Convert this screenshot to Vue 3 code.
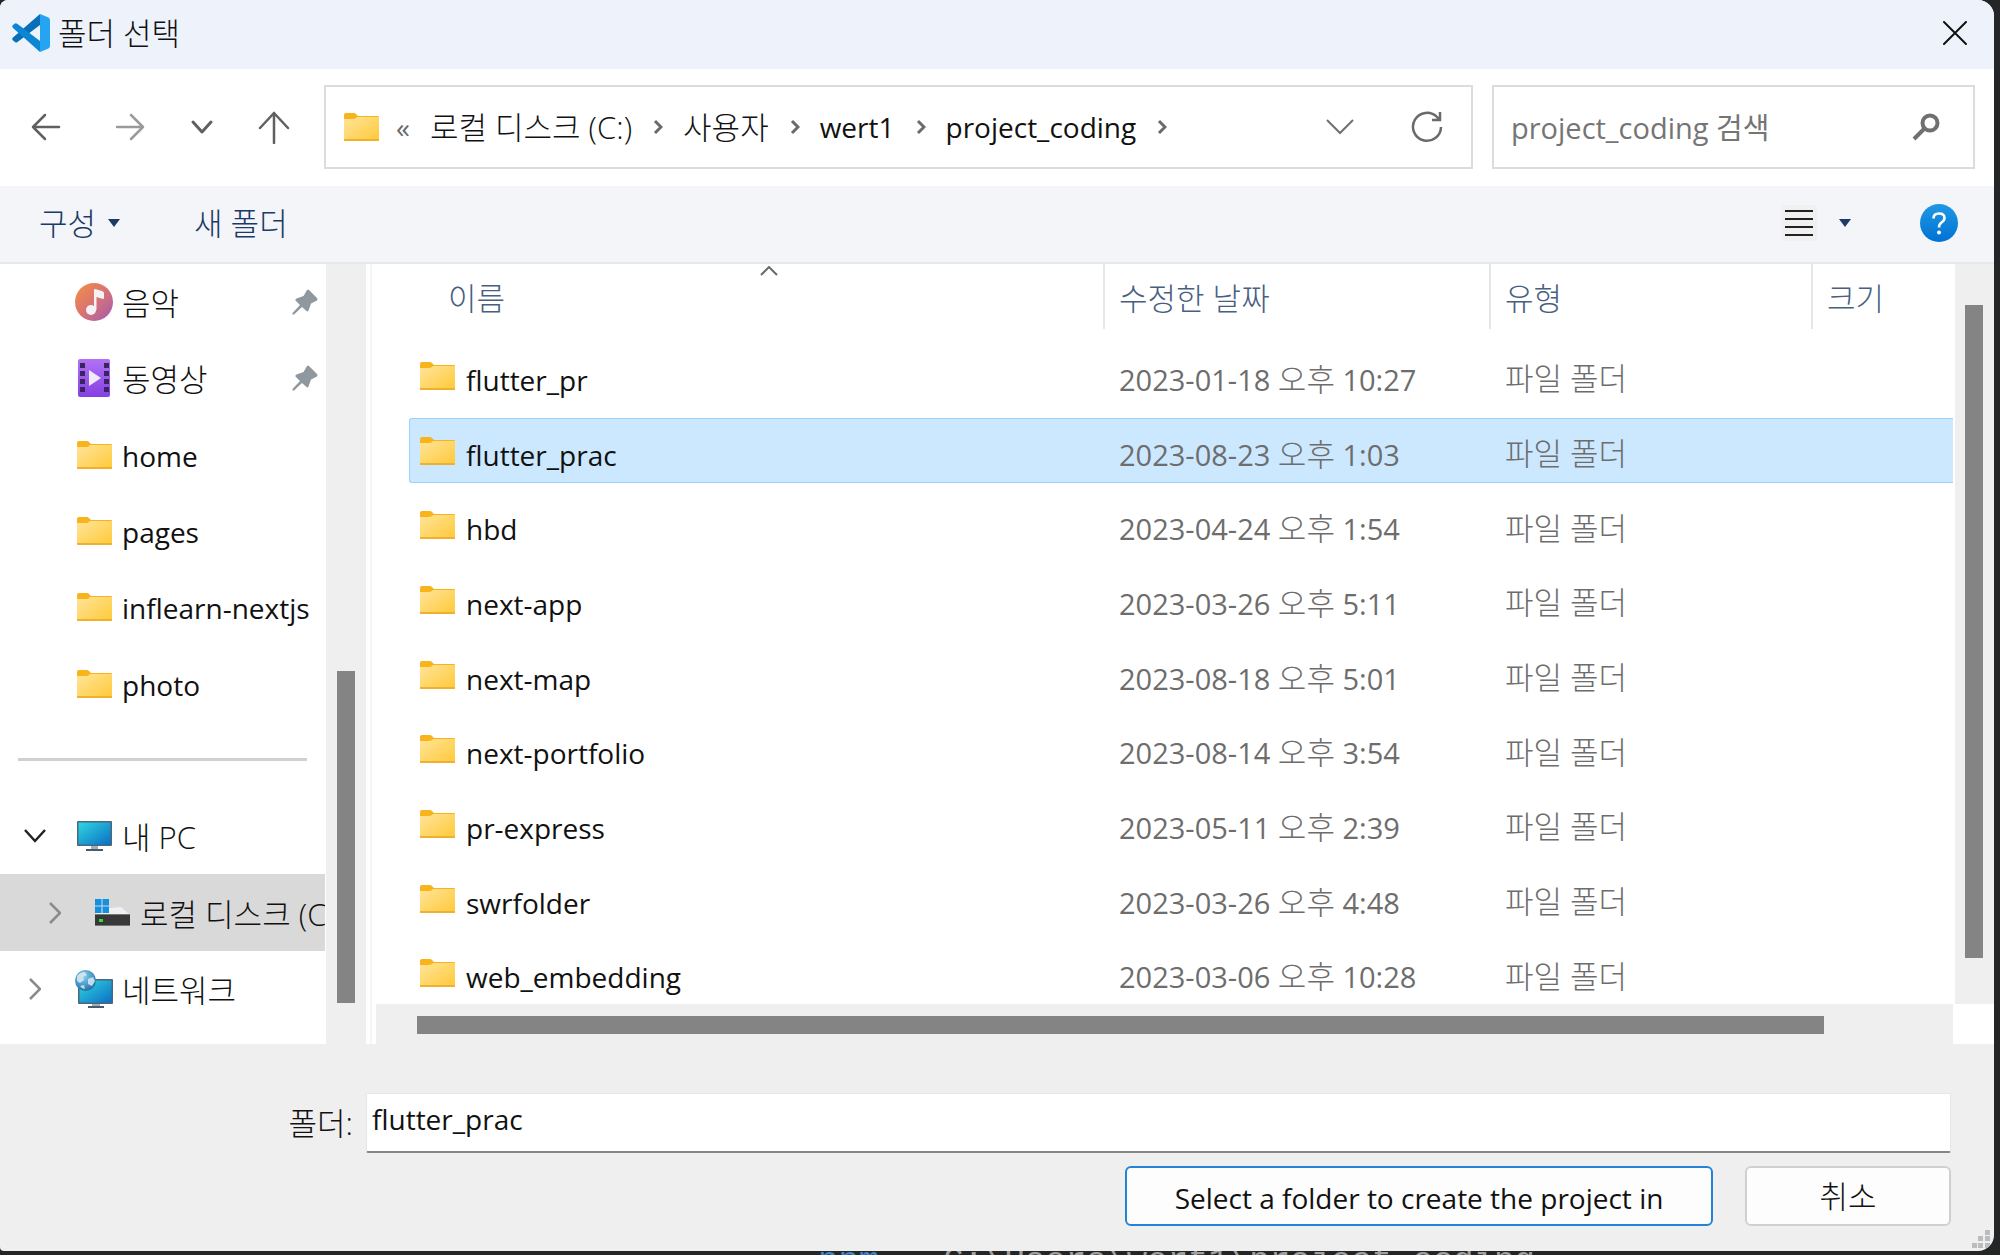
<script setup>
import { ref } from 'vue'

const folderName = ref('flutter_prac')
const search = ref('')
const selected = ref('flutter_prac')

const crumbs = [
  { text: '로컬 디스크 (C:)', korean: true },
  { text: '사용자', korean: true },
  { text: 'wert1' },
  { text: 'project_coding' },
]

const places = [
  { name: '음악', icon: 'music', pinned: true, korean: true },
  { name: '동영상', icon: 'video', pinned: true, korean: true },
  { name: 'home', icon: 'folder' },
  { name: 'pages', icon: 'folder' },
  { name: 'inflearn-nextjs', icon: 'folder' },
  { name: 'photo', icon: 'folder' },
  { separator: true },
  { name: '내 PC', icon: 'pc', arrow: 'down', korean: true },
  { name: '로컬 디스크 (C:)', icon: 'disk', arrow: 'right', nested: true, active: true, korean: true },
  { name: '네트워크', icon: 'network', arrow: 'right', korean: true },
]

const files = [
  { name: 'flutter_pr', day: '2023-01-18', half: '오후', time: '10:27' },
  { name: 'flutter_prac', day: '2023-08-23', half: '오후', time: '1:03' },
  { name: 'hbd', day: '2023-04-24', half: '오후', time: '1:54' },
  { name: 'next-app', day: '2023-03-26', half: '오후', time: '5:11' },
  { name: 'next-map', day: '2023-08-18', half: '오후', time: '5:01' },
  { name: 'next-portfolio', day: '2023-08-14', half: '오후', time: '3:54' },
  { name: 'pr-express', day: '2023-05-11', half: '오후', time: '2:39' },
  { name: 'swrfolder', day: '2023-03-26', half: '오후', time: '4:48' },
  { name: 'web_embedding', day: '2023-03-06', half: '오후', time: '10:28' },
]

function choose(name) {
  selected.value = name
  folderName.value = name
}
</script>

<template>
  <div class="desktop">
    <!-- shared icon shapes -->
    <svg class="defs" width="0" height="0" aria-hidden="true">
      <defs>
        <linearGradient id="gFolder" x1="0" y1="0" x2="1" y2="1">
          <stop offset="0" stop-color="#ffe49a" />
          <stop offset="1" stop-color="#ffc937" />
        </linearGradient>
        <linearGradient id="gScreen" x1="0" y1="0" x2="1" y2="1">
          <stop offset="0" stop-color="#2fd6e0" />
          <stop offset="1" stop-color="#0c6fc4" />
        </linearGradient>
        <linearGradient id="gMusic" x1="0" y1="0" x2="1" y2="1">
          <stop offset="0" stop-color="#f3913f" />
          <stop offset="0.5" stop-color="#d97373" />
          <stop offset="1" stop-color="#a25ab4" />
        </linearGradient>
        <linearGradient id="gVideo" x1="0" y1="0" x2="0" y2="1">
          <stop offset="0" stop-color="#b172f5" />
          <stop offset="1" stop-color="#8440e2" />
        </linearGradient>
        <linearGradient id="gHelp" x1="0" y1="0" x2="0" y2="1">
          <stop offset="0" stop-color="#1f98e4" />
          <stop offset="1" stop-color="#0072d4" />
        </linearGradient>
        <radialGradient id="gGlobe" cx="0.4" cy="0.3" r="0.8">
          <stop offset="0" stop-color="#8fd0ee" />
          <stop offset="0.6" stop-color="#3f93c4" />
          <stop offset="1" stop-color="#1f5f90" />
        </radialGradient>
      </defs>
      <symbol id="i-folder" viewBox="0 0 35 28">
        <path d="M0 2Q0 0 2 0H10Q11 0 12 1L14 3H34Q35 3 35 4V9H0Z" fill="#f9b31b" />
        <path d="M0 6H9Q11 6 12 5L13 4H35V27Q35 28 34 28H1Q0 28 0 27Z" fill="url(#gFolder)" />
        <path d="M0 26H35V27Q35 28 34 28H1Q0 28 0 27Z" fill="#eeb02e" />
      </symbol>
      <symbol id="i-music" viewBox="0 0 38 38">
        <circle cx="19" cy="19" r="19" fill="url(#gMusic)" />
        <circle cx="16" cy="27" r="5" fill="#f5f2f4" />
        <path d="M19 7Q19 6 20 6L27 8Q29 9 29 10V15Q29 16 28 16L21.500 14V27H19Z" fill="#f5f2f4" />
      </symbol>
      <symbol id="i-video" viewBox="0 0 38 38">
        <rect x="3" y="0" width="32" height="38" rx="2" fill="url(#gVideo)" />
        <g fill="#3b2360">
          <path d="M5 4h5v5H5zM5 12h5v5H5zM5 20h5v5H5zM5 28h5v5H5zM29 4h5v5h-5zM29 12h5v5h-5zM29 20h5v5h-5zM29 28h5v5h-5z" />
        </g>
        <path d="M14 11L26 19L14 27Z" fill="#f1eaf8" />
      </symbol>
      <symbol id="i-pc" viewBox="0 0 35 30">
        <rect x="0" y="0" width="35" height="25" rx="1" fill="#47687d" />
        <rect x="1.500" y="1.500" width="32" height="22" fill="url(#gScreen)" />
        <path d="M14 25h7v3h-7z" fill="#9db0bd" />
        <path d="M9 28h17v2H9z" fill="#4b5a66" />
      </symbol>
      <symbol id="i-disk" viewBox="0 0 35 27">
        <path d="M5 10L26 8L35 16H0Z" fill="#eef0f3" />
        <path d="M0 0h6.500v6.500H0zM7.500 0H14v6.500H7.500zM0 7.500h6.500V14H0zM7.500 7.500H14V14H7.500z" fill="#1390e0" />
        <rect x="0" y="15" width="35" height="12" fill="#383838" />
        <path d="M0 15H35V16H0zM0 26H35V27H0z" fill="#777" />
        <rect x="4" y="20" width="4" height="3" fill="#2fe02f" />
      </symbol>
      <symbol id="i-network" viewBox="0 0 38 39">
        <rect x="3" y="9" width="35" height="25" rx="1" fill="#47687d" />
        <rect x="4.500" y="10.500" width="32" height="22" fill="url(#gScreen)" />
        <path d="M17 34h8v3h-8z" fill="#9db0bd" />
        <path d="M13 36h16v2H13z" fill="#4b5a66" />
        <circle cx="10.500" cy="10.500" r="10.500" fill="url(#gGlobe)" />
        <path d="M2 6Q5 2 10 2L12 5L8 7L9 10L5 13L2 11ZM13 9L18 7L20 11L17 16L13 14ZM5 16L9 15L10 19Q7 19 5 16Z" fill="#d8eaf2" opacity="0.85" />
      </symbol>
      <symbol id="i-crumb" viewBox="0 0 10 16">
        <path d="M2 2L8 8L2 14" fill="none" stroke="#6a6a6a" stroke-width="3" />
      </symbol>
    </svg>

    <section class="dialog" aria-label="폴더 선택">
      <header class="titlebar">
        <svg class="logo" viewBox="0 0 38 38" width="38" height="38" aria-hidden="true">
          <path d="M28 0V11L5.500 28Q4 29 3 28L1 26.500Q-0.500 25 1 23.500Z" fill="#0a6fb9" />
          <path d="M28 27L5.500 10Q4 9 3 9.500L1 11Q-0.500 12.500 1 14L28 38Z" fill="#0a86d3" />
          <path d="M28 0L36.500 3.500Q38 4.500 38 6V32Q38 33.500 36.500 34.500L28 38Z" fill="#25a5f1" />
        </svg>
        <h1 class="title">폴더 선택</h1>
        <button class="close" type="button" aria-label="닫기">
          <svg viewBox="0 0 24 24" width="24" height="24"><path d="M1 1L23 23M23 1L1 23" fill="none" stroke="#111" stroke-width="2" stroke-linecap="round" /></svg>
        </button>
      </header>

      <nav class="navbar" aria-label="탐색">
        <div class="history">
          <button class="back" type="button" aria-label="뒤로">
            <svg viewBox="0 0 32 32" width="32" height="32"><path d="M29 16H3M15 4L3 16L15 28" fill="none" stroke="#606060" stroke-width="2.500" stroke-linecap="round" stroke-linejoin="round" /></svg>
          </button>
          <button type="button" aria-label="앞으로">
            <svg viewBox="0 0 32 32" width="32" height="32"><path d="M3 16H29M17 4L29 16L17 28" fill="none" stroke="#9a9a9a" stroke-width="2.500" stroke-linecap="round" stroke-linejoin="round" /></svg>
          </button>
          <button type="button" aria-label="최근 위치">
            <svg viewBox="0 0 32 32" width="32" height="32"><path d="M7 11L16 21L25 11" fill="none" stroke="#606060" stroke-width="3" stroke-linecap="round" stroke-linejoin="round" /></svg>
          </button>
          <button type="button" aria-label="위로">
            <svg viewBox="0 0 32 34" width="32" height="34"><path d="M16 33V3M2 18L16 3L30 18" fill="none" stroke="#606060" stroke-width="2.500" stroke-linecap="round" stroke-linejoin="round" /></svg>
          </button>
        </div>
        <div class="address">
          <svg class="folder" aria-hidden="true"><use href="#i-folder" /></svg>
          <span class="more">«</span>
          <ol class="crumbs">
            <li v-for="c in crumbs" :key="c.text">
              <a href="#" :class="{ korean: c.korean }">{{ c.text }}</a>
              <svg class="crumb-arrow" aria-hidden="true"><use href="#i-crumb" /></svg>
            </li>
          </ol>
          <button class="drop" type="button" aria-label="이전 위치">
            <svg viewBox="0 0 28 16" width="28" height="16"><path d="M1 1L14 14L27 1" fill="none" stroke="#707070" stroke-width="2" /></svg>
          </button>
          <button class="refresh" type="button" aria-label="새로 고침">
            <svg viewBox="0 0 32 32" width="32" height="32"><path d="M30 16A14 14 0 1 1 26 6L28.500 8.500M29 1V9H21" fill="none" stroke="#6a6a6a" stroke-width="2.500" /></svg>
          </button>
        </div>
        <div class="search">
          <input v-model="search" type="text" placeholder="project_coding 검색" aria-label="project_coding 검색" />
          <svg viewBox="0 0 28 28" width="28" height="28" aria-hidden="true"><circle cx="18" cy="10" r="7.500" fill="none" stroke="#707070" stroke-width="4" /><path d="M12 16L2 26" fill="none" stroke="#707070" stroke-width="4" /></svg>
        </div>
      </nav>

      <div class="toolbar">
        <button class="organize" type="button">구성
          <svg viewBox="0 0 12 8" width="12" height="8" aria-hidden="true"><path d="M0 0H12L6 8Z" fill="#1b3a66" /></svg>
        </button>
        <button class="new-folder" type="button">새 폴더</button>
        <button class="view" type="button" aria-label="보기 변경">
          <svg class="lines" viewBox="0 0 36 36" width="36" height="36"><rect width="36" height="36" rx="2" fill="#f0f0f0" /><path d="M4 6H32M4 14H32M4 22H32M4 30H32" stroke="#222" stroke-width="2" /></svg>
          <svg viewBox="0 0 12 8" width="12" height="8"><path d="M0 0H12L6 8Z" fill="#1b3a66" /></svg>
        </button>
        <button class="help" type="button" aria-label="도움말">
          <svg viewBox="0 0 38 38" width="38" height="38"><circle cx="19" cy="19" r="19" fill="url(#gHelp)" /><path d="M13.500 14.500Q13.500 9.500 19 9.500Q24.500 9.500 24.500 14Q24.500 16.500 21.500 18.500Q19 20.200 19 23.500" fill="none" stroke="#fff" stroke-width="2.600" /><circle cx="19" cy="28.500" r="2" fill="#fff" /></svg>
        </button>
      </div>

      <main class="body">
        <ul class="sidebar">
          <li
            v-for="(p, i) in places"
            :key="i"
            :class="{ separator: p.separator, active: p.active, nested: p.nested }"
          >
            <template v-if="!p.separator">
              <span class="twist">
                <svg v-if="p.arrow === 'down'" viewBox="0 0 22 14" width="22" height="14"><path d="M1 1L11 12L21 1" fill="none" stroke="#222" stroke-width="2.500" /></svg>
                <svg v-if="p.arrow === 'right'" viewBox="0 0 12 22" width="12" height="22"><path d="M1 1L11 11L1 21" fill="none" stroke="#8a8a8a" stroke-width="2.500" /></svg>
              </span>
              <span class="place-icon">
                <svg :class="p.icon" aria-hidden="true"><use :href="'#i-' + p.icon" /></svg>
              </span>
              <span class="place-name" :class="{ korean: p.korean }">{{ p.name }}</span>
              <svg v-if="p.pinned" class="pin" viewBox="0 0 26 26" width="26" height="26" aria-hidden="true"><path d="M15 1Q16 0 17 1L25 9Q26 10 25 11.500L19 14.500L16.500 21.500Q15.500 23 14.500 22L10 18L2 25.500H0.500V24L8 16L3.500 11.500Q3 10 4.500 9.500L11.500 7Z" fill="#8f989f" /></svg>
            </template>
          </li>
        </ul>
        <div class="side-scroll"><span class="thumb"></span></div>
        <div class="splitter"></div>

        <div class="pane">
          <div class="list">
            <table>
              <colgroup>
                <col />
                <col class="c-date" />
                <col class="c-type" />
                <col class="c-size" />
              </colgroup>
              <thead>
                <tr>
                  <th class="h-name" scope="col" aria-sort="ascending">이름
                    <svg class="sort" viewBox="0 0 18 10" width="18" height="10" aria-hidden="true"><path d="M1 9L9 1L17 9" fill="none" stroke="#6a6a6a" stroke-width="2" /></svg>
                  </th>
                  <th scope="col">수정한 날짜</th>
                  <th scope="col">유형</th>
                  <th scope="col">크기</th>
                </tr>
              </thead>
              <tbody>
                <tr v-for="f in files" :key="f.name" :class="{ selected: f.name === selected }" @click="choose(f.name)">
                  <td class="name">
                    <div class="name-box">
                      <svg class="folder" aria-hidden="true"><use href="#i-folder" /></svg>
                      <span>{{ f.name }}</span>
                    </div>
                  </td>
                  <td class="date">{{ f.day }} <span class="korean">{{ f.half }}</span> {{ f.time }}</td>
                  <td class="korean">파일 폴더</td>
                  <td></td>
                </tr>
              </tbody>
            </table>
          </div>
          <div class="v-scroll"><span class="thumb"></span></div>
          <div class="h-scroll"><span class="thumb"></span></div>
        </div>
      </main>

      <footer class="footer">
        <div class="field">
          <label for="folder-name">폴더:</label>
          <input id="folder-name" v-model="folderName" type="text" />
        </div>
        <div class="actions">
          <button class="primary" type="button">Select a folder to create the project in</button>
          <button class="cancel" type="button">취소</button>
        </div>
        <svg class="grip" viewBox="0 0 18 18" width="18" height="18" aria-hidden="true"><path d="M13 0h5v5h-5zM13 6h5v5h-5zM13 13h5v5h-5zM6 6h5v5H6zM6 13h5v5H6zM0 13h5v5H0z" fill="#bcbcbc" /></svg>
      </footer>
    </section>

    <p class="console"><span class="cmd">npm</span><span>C:\Users\wert1\project_coding</span></p>
  </div>
</template>

<style>
body {
  margin: 0;
  background: #1c1c1c;
}
</style>

<style scoped>
.desktop {
  height: 100vh;
  overflow: hidden;
  box-sizing: border-box;
  padding-right: 6px;
  display: flex;
  flex-direction: column;
  background: #232526;
  font-family: "Open Sans", "Noto Sans CJK KR", sans-serif;
  font-size: 28px;
  line-height: 40px;
  color: #111;
}
.defs {
  position: absolute;
}
button,
input {
  font: inherit;
  color: inherit;
  margin: 0;
}
button {
  padding: 0;
  border: 0;
  background: none;
  display: flex;
  align-items: center;
}
svg {
  flex: none;
  display: block;
}
.dialog {
  position: relative;
  flex: 1;
  min-height: 0;
  display: flex;
  flex-direction: column;
  overflow: hidden;
  background: #efefef;
  border-radius: 8px 16px 16px 4px;
}
.korean {
  font-size: 31px;
  font-weight: 300;
}
.folder {
  width: 35px;
  height: 28px;
}

/* title bar */
.titlebar {
  height: 69px;
  display: flex;
  align-items: center;
  padding: 0 27px 4px 12px;
  box-sizing: border-box;
  background: #eef3fb;
}
.title {
  flex: 1;
  margin: 0 0 0 8px;
  font-size: 31px;
  font-weight: 300;
}

/* navigation row */
.navbar {
  height: 117px;
  box-sizing: border-box;
  display: flex;
  align-items: center;
  padding: 0 19px 2px 30px;
  background: #fff;
}
.history {
  display: flex;
  align-items: center;
  gap: 40px;
  margin-right: 34px;
}
.back {
  margin-right: 12px;
}
.address,
.search {
  height: 84px;
  box-sizing: border-box;
  border: 2px solid #dcdcdc;
  display: flex;
  align-items: center;
  background: #fff;
}
.address {
  flex: 1;
  padding: 0 28px 0 18px;
}
.more {
  margin: 0 20px 0 17px;
  color: #6a6a6a;
}
.crumbs {
  flex: 1;
  display: flex;
  margin: 0;
  padding: 0;
  list-style: none;
}
.crumbs li {
  display: flex;
  align-items: center;
}
.crumbs a {
  color: inherit;
  text-decoration: none;
  white-space: nowrap;
}
.crumb-arrow {
  width: 10px;
  height: 16px;
  margin: 0 20px 0 21px;
}
.drop {
  margin-right: 57px;
}
.search {
  width: 483px;
  margin-left: 19px;
  padding: 0 33px 0 17px;
}
.search input {
  flex: 1;
  min-width: 0;
  border: 0;
  padding: 2px 0 0;
  outline: 0;
  background: none;
  font-size: 29px;
}
.search input::placeholder {
  color: #757575;
  opacity: 1;
}

/* command bar */
.toolbar {
  height: 78px;
  box-sizing: border-box;
  border-bottom: 2px solid #e6e8eb;
  display: flex;
  align-items: center;
  padding: 0 36px 2px 39px;
  background: #f4f5f8;
  color: #1b3a66;
  font-size: 31px;
  font-weight: 300;
}
.organize {
  gap: 12px;
}
.new-folder {
  margin: 0 auto 0 74px;
}
.view {
  gap: 22px;
}
.help {
  margin-left: 69px;
}

/* places */
.body {
  flex: 1;
  min-height: 0;
  display: flex;
  background: #fff;
}
.sidebar {
  width: 325px;
  margin: 0 1px 0 0;
  padding: 0;
  list-style: none;
  overflow: hidden;
}
.sidebar li {
  height: 76px;
  box-sizing: border-box;
  display: flex;
  align-items: center;
  padding: 0 7px 0 15px;
}
.sidebar li:nth-child(3n) {
  height: 77px;
}
.sidebar li.nested {
  padding-left: 33px;
  padding-right: 0;
}
.sidebar li.active {
  background: #d9d9d9;
}
.sidebar li.separator {
  padding: 0 18px 2px;
}
.separator::before {
  content: "";
  flex: 1;
  height: 3px;
  background: #d0d0d0;
}
.twist {
  flex: none;
  width: 40px;
  margin-right: 20px;
  display: flex;
  justify-content: center;
}
.nested .twist {
  width: 44px;
  margin-right: 16px;
}
.place-icon {
  flex: none;
  width: 38px;
  margin-right: 9px;
  display: flex;
  justify-content: center;
}
.music,
.video {
  width: 38px;
  height: 38px;
}
.pc {
  width: 35px;
  height: 30px;
}
.disk {
  width: 35px;
  height: 27px;
}
.network {
  width: 38px;
  height: 39px;
}
.place-name {
  flex: 1;
  min-width: 0;
  padding-top: 2px;
  overflow: hidden;
  white-space: nowrap;
}
.side-scroll {
  flex: none;
  width: 40px;
  box-sizing: border-box;
  padding: 407px 11px 41px;
  display: flex;
  background: #efefef;
}
.thumb {
  flex: 1;
  background: #848484;
}
.splitter {
  flex: none;
  width: 2px;
  margin: 0 4px;
  background: #f5f5f5;
}

/* file list */
.pane {
  flex: 1;
  min-width: 0;
  display: grid;
  grid-template-columns: minmax(0, 1fr) 41px;
  grid-template-rows: minmax(0, 1fr) 40px;
}
.list {
  overflow: hidden;
  padding-left: 33px;
}
table {
  width: 100%;
  table-layout: fixed;
  border-collapse: separate;
  border-spacing: 0 10px;
  margin-top: -10px;
}
.c-date {
  width: 386px;
}
.c-type {
  width: 322px;
}
.c-size {
  width: 142px;
}
th {
  position: relative;
  height: 69px;
  box-sizing: border-box;
  padding: 0 0 2px 16px;
  text-align: left;
  font-size: 31px;
  font-weight: 300;
  color: #48607f;
}
th + th::before {
  content: "";
  position: absolute;
  left: 0;
  top: 0;
  width: 2px;
  height: 65px;
  background: #e6e6e6;
}
.h-name {
  padding-left: 39px;
}
.sort {
  position: absolute;
  left: 351px;
  top: 2px;
}
td {
  height: 65px;
  box-sizing: border-box;
  padding: 5px 0 0 16px;
  white-space: nowrap;
  color: #6d6d6d;
  border: solid transparent;
  border-width: 1px 0;
}
tr:nth-child(3n) td {
  height: 64px;
}
td.date {
  padding-top: 7px;
  font-size: 29px;
}
td.name {
  padding: 4px 0 0 11px;
  color: #111;
}
.name-box {
  display: flex;
  align-items: flex-start;
  gap: 11px;
}
.name-box span {
  padding-top: 4px;
}
.name-box .folder {
  margin-top: 6px;
}
.selected td {
  background: #cce8ff;
  border-color: #99d1ff;
}
.selected td.name {
  padding-left: 10px;
  border-left: 1px solid #99d1ff;
  border-radius: 3px 0 0 3px;
}
.v-scroll {
  display: flex;
  margin-left: 2px;
  padding: 41px 11px 46px 10px;
  background: #efefef;
}
.h-scroll {
  display: flex;
  padding: 12px 129px 10px 41px;
  background: #efefef;
}

/* footer */
.footer {
  padding: 49px 43px 25px;
}
.field {
  display: flex;
  align-items: center;
}
.field label {
  width: 310px;
  margin-right: 13px;
  text-align: right;
  font-size: 31px;
  font-weight: 300;
}
.field input {
  flex: 1;
  min-width: 0;
  height: 60px;
  box-sizing: border-box;
  padding: 0 5px 7px;
  border: 1px solid #e6e6e6;
  border-bottom: 2px solid #868686;
  border-radius: 2px;
  outline: 0;
  background: #fff;
}
.actions {
  display: flex;
  justify-content: flex-end;
  gap: 32px;
  margin-top: 13px;
}
.actions button {
  height: 60px;
  box-sizing: border-box;
  justify-content: center;
  border: 2px solid #d0d0d0;
  border-radius: 6px;
  background: #fdfdfd;
}
.actions .primary {
  width: 588px;
  padding-top: 4px;
  border-color: #2583d6;
}
.actions .cancel {
  width: 206px;
  font-size: 31px;
  font-weight: 300;
}
.grip {
  position: absolute;
  right: 4px;
  bottom: 3px;
}

/* terminal window behind the dialog */
.console {
  flex: none;
  height: 4px;
  margin: 0;
  padding-left: 818px;
  overflow: hidden;
  display: flex;
  gap: 64px;
  font-family: "Liberation Mono", monospace;
  font-size: 34px;
  line-height: 20px;
  color: #a0a0a0;
}
.cmd {
  color: #3f86c8;
}
</style>
